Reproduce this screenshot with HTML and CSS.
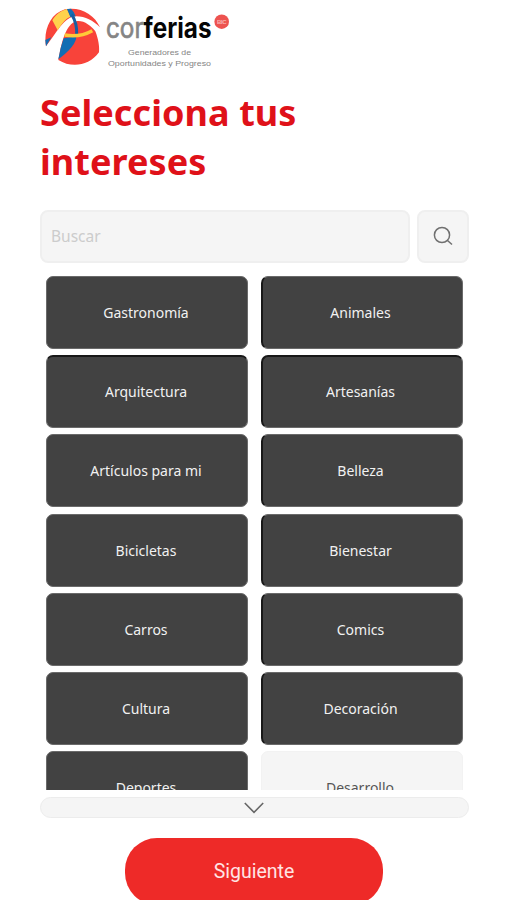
FILE: index.html
```html
<!DOCTYPE html>
<html lang="es">
<head>
<meta charset="utf-8">
<title>Selecciona tus intereses</title>
<link rel="stylesheet" href="styles.css">
</head>
<body>
<main class="screen">
  <header class="brand">
    <svg class="logo" viewBox="40 0 200 76" role="img" aria-label="Corferias">
      <g transform="translate(30 0) scale(.33333)">
        <path fill="#f8433a" d="M48 139C40 95 58 42 105 28C151 19 194 44 210 82C189 62 166 49 139 49C101 50 79 101 48 139Z"/>
        <path fill="#ffd24c" d="M67 61C79 41 94 32 111 27L122 50C107 54 95 72 83 91Z"/>
        <path fill="#126db3" d="M111 27L123 26Q132 34 137 49L121 51Z"/>
        <path fill="#126db3" d="M48 139L46 120L64 112Z"/>
        <path fill="#f8433a" d="M85 180C93 140 101 88 129 68C150 54 181 73 196 94C205 117 209 140 207 157C177 198 125 205 85 180Z"/>
        <path fill="#126db3" d="M85 178Q91 142 101 115L139 109Q139 138 85 178Z"/>
        <path fill="none" stroke="#165ea2" stroke-width="9" d="M125 43Q142 70 140 106"/>
        <path fill="none" stroke="#ffca38" stroke-width="10" d="M104 105Q149 113 187 92"/>
      </g>
      <text class="logo-word" x="106" y="38.3" textLength="105.5" lengthAdjust="spacingAndGlyphs"><tspan class="logo-light">cor</tspan><tspan class="logo-bold">ferias</tspan></text>
      <circle cx="221.7" cy="21.7" r="7.3" fill="#ed5350"/>
      <text class="logo-badge" x="217" y="24.3" textLength="9.5">BIC</text>
      <text class="logo-sub" x="128" y="54.5" textLength="63" lengthAdjust="spacingAndGlyphs">Generadores de</text>
      <text class="logo-sub" x="108" y="65.5" textLength="103" lengthAdjust="spacingAndGlyphs">Oportunidades y Progreso</text>
    </svg>
  </header>
  <h1 class="title">Selecciona tus<br>intereses</h1>
  <form class="search">
    <input class="search-input" type="text" placeholder="Buscar" aria-label="Buscar">
    <button class="search-button" type="button" aria-label="Buscar">
      <svg class="search-icon" viewBox="0 0 20 20"><circle cx="9" cy="9" r="7.6"/><path d="M14.5 14.5L19 18.5"/></svg>
    </button>
  </form>
  <section class="interests">
    <button class="tile">Gastronomía</button>
    <button class="tile">Animales</button>
    <button class="tile tile-edge">Arquitectura</button>
    <button class="tile tile-edge">Artesanías</button>
    <button class="tile">Artículos para mi</button>
    <button class="tile">Belleza</button>
    <button class="tile">Bicicletas</button>
    <button class="tile">Bienestar</button>
    <button class="tile">Carros</button>
    <button class="tile">Comics</button>
    <button class="tile">Cultura</button>
    <button class="tile">Decoración</button>
    <button class="tile">Deportes</button>
    <button class="tile tile-off">Desarrollo</button>
  </section>
  <button class="more" aria-label="Ver más">
    <svg class="more-icon" viewBox="0 0 20 12"><path d="M.8 1L10 10.3L19.2 1"/></svg>
  </button>
  <button class="next">Siguiente</button>
</main>
</body>
</html>
```

FILE: styles.css
```css
* { box-sizing: border-box; }
body { margin: 0; background: #fff; font-family: "Noto Sans", sans-serif; }
button, input { font-family: inherit; margin: 0; }
.screen {
  width: 506px;
  height: 900px;
  padding: 0 37px 0 40px;
  overflow: hidden;
  display: flex;
  flex-direction: column;
}
.brand { height: 76px; flex: none; }
.logo { display: block; width: 200px; height: 76px; }
.logo-word { font-family: Inter, sans-serif; font-size: 28px; }
.logo-light { font-weight: 400; fill: #858585; stroke: #858585; stroke-width: .7px; }
.logo-bold { font-weight: 700; fill: #050505; }
.logo-badge { font: 700 6px "Liberation Sans", sans-serif; fill: #f9b4b1; }
.logo-sub { font: 400 8px "Liberation Sans", sans-serif; fill: #858585; }
.title {
  margin: 12px 0 0;
  height: 98px;
  flex: none;
  color: #df1119;
  font-size: 36px;
  letter-spacing: .08px;
  line-height: 49px;
  font-weight: 700;
}
.search { display: flex; flex: none; gap: 7px; height: 53px; margin-top: 23.5px; }
.search-input, .search-button {
  background: #f5f5f5;
  border: 2px solid #efefef;
  border-radius: 8px;
}
.search-input { width: 371px; padding: 0 9px; font-size: 15.5px; }
.search-input::placeholder { color: #ccc; opacity: 1; }
.search-button { width: 52px; padding: 0; display: grid; place-items: center; }
.search-icon { width: 20px; height: 20px; fill: none; stroke: #707070; stroke-width: 1.5; }
.interests {
  display: grid;
  grid-template-columns: 202px 202px;
  grid-auto-rows: 73px;
  gap: 6.2px 12.5px;
  margin: 13.5px 0 0 6px;
  height: 514px;
  flex: none;
  overflow: hidden;
}
.tile {
  padding: 0 2px 0 0;
  border: 1px solid #6a6a6a;
  border-radius: 7px;
  background: #424242;
  color: #f1f1f1;
  font-size: 14px;
}
.tile:nth-child(even) { padding-right: 3px; border-left: 2px solid #181818; }
.tile-edge { padding-bottom: 2px; border-top: 2px solid #181818; }
.interests .tile-off { background: #f5f5f5; border: 1px solid #f2f2f2; color: #555; }
.more {
  flex: none;
  height: 21px;
  width: 429px;
  margin-top: 7px;
  padding: 0 2px 0 0;
  border: 1.5px solid #ececec;
  border-radius: 11px;
  background: #f5f5f5;
  display: grid;
  place-items: center;
}
.more-icon { width: 20px; height: 12px; fill: none; stroke: #666; stroke-width: 1.6; }
.next {
  flex: none;
  width: 258px;
  height: 67px;
  margin: 20px 0 0 85px;
  padding: 0;
  border: 0;
  border-radius: 32px;
  background: #ee2a28;
  color: #ffe4e4;
  font: 400 19.5px Roboto, sans-serif;
}
```
